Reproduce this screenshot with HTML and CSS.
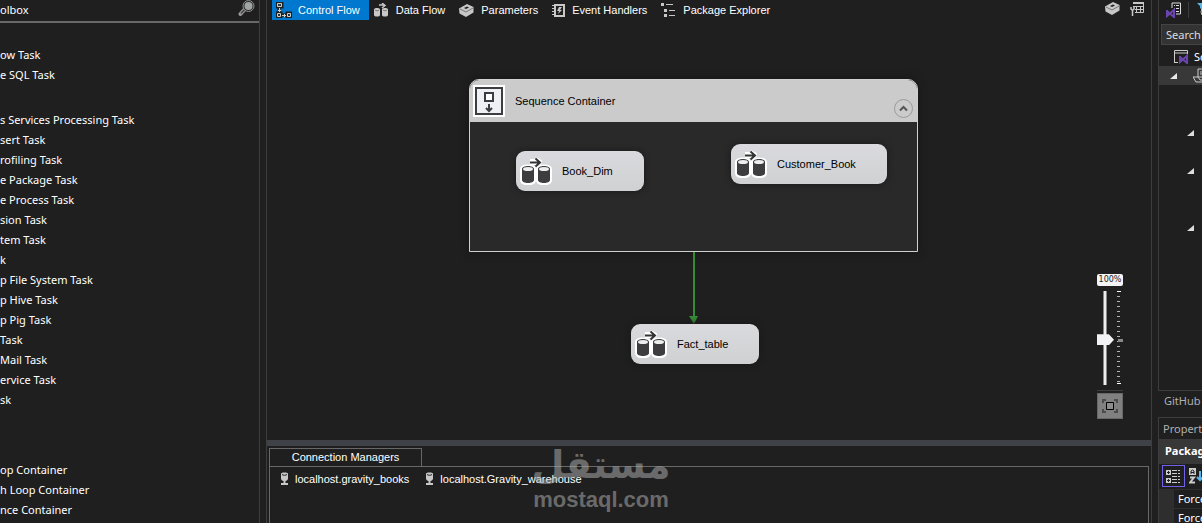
FILE: index.html
```html
<!DOCTYPE html>
<html lang="en">
<head>
<meta charset="utf-8">
<title>Package designer</title>
<link rel="stylesheet" href="styles.css">
</head>
<body>
<svg class="defs" width="0" height="0" aria-hidden="true">
  <symbol id="dataflow" viewBox="0 0 32 28">
    <g class="halo">
      <path d="M10 5h10M15 3l4 2-4 2"/>
      <path d="M3 12v11c0 3 10 3 10 0V12c0-2-10-2-10 0zM19 12v11c0 3 10 3 10 0V12c0-2-10-2-10 0z"/>
    </g>
    <path class="ink-line" d="M10 5.500h10M15.500 1.500l4.500 4-4.500 4"/>
    <path class="ink" d="M2 12v11c0 4 12 4 12 0V12c0-4-12-4-12 0zM18 12v11c0 4 12 4 12 0V12c0-4-12-4-12 0z"/>
    <ellipse class="lid" cx="8" cy="12" rx="5" ry="2"/>
    <ellipse class="lid" cx="24" cy="12" rx="5" ry="2"/>
  </symbol>
  <symbol id="cube" viewBox="0 0 15 13">
    <path class="fill" d="M0 4.500 8 0l6.500 3v5.500L7 13 .5 9.500z"/>
    <path class="cut-soft" d="M1 5l6 3 7-4"/>
    <path class="cut" d="M5 4l3-1.500 2 1-3 1.500z"/>
  </symbol>
  <symbol id="connection" viewBox="0 0 10 14">
    <path class="fill" d="M1 1.500C1 0 8 0 8 1.500v5C8 8 6.500 9 5.500 9v2H8v2H1v-2h2.500V9C2.500 9 1 8 1 6.500z"/>
    <path class="cut-line" d="M2 2.500c1 1 4 1 5 0"/>
  </symbol>
</svg>

<div class="shell">
  <aside class="toolbox">
    <header class="toolbox-head">
      <h2>olbox</h2>
      <button class="icon-btn" aria-label="Search toolbox">
        <svg width="17" height="17" viewBox="0 0 17 17"><path d="M7 9 2.500 14" stroke="#999" stroke-width="4" stroke-linecap="round"/><path d="M8 8 3 13.500" stroke="#444" stroke-width="1.500"/><circle cx="10.500" cy="6" r="5.500" fill="#2a2a2a" stroke="#8f8f8f"/><circle cx="10.500" cy="6" r="4" fill="#9fa6a4"/></svg>
      </button>
    </header>
    <ul class="tools">
      <li>ow Task</li>
      <li>e SQL Task</li>
    </ul>
    <ul class="tools tools-common">
      <li>s Services Processing Task</li>
      <li>sert Task</li>
      <li>rofiling Task</li>
      <li>e Package Task</li>
      <li>e Process Task</li>
      <li>sion Task</li>
      <li>tem Task</li>
      <li>k</li>
      <li>p File System Task</li>
      <li>p Hive Task</li>
      <li>p Pig Task</li>
      <li>Task</li>
      <li>Mail Task</li>
      <li>ervice Task</li>
      <li>sk</li>
    </ul>
    <ul class="tools tools-containers">
      <li>op Container</li>
      <li>h Loop Container</li>
      <li>nce Container</li>
    </ul>
  </aside>

  <main class="document">
    <nav class="tabs">
      <button class="tab tab-active">
        <svg width="16" height="16" viewBox="0 0 16 16" fill="none" stroke="#1f1f1f" stroke-width="3"><path d="M1 1h5v4H1zM1 11h4v4H1zM11 11h4v4h-4zM3 5v5M6 13h4"/><g stroke="#d8d0c4" stroke-width="1"><path d="M1.500 1.500h4v3h-4zM1.500 11.500h3v3h-3zM11.500 11.500h3v3h-3zM3.500 6v4M2 8.500h3M6 13.500h4M8.500 12v3"/></g></svg>
        Control Flow</button>
      <button class="tab">
        <svg width="15" height="14" viewBox="0 0 15 14"><path d="M5 2h5M8 0l3 2.500L8 5" fill="none" stroke="#c8c8c8" stroke-width="1.500"/><path class="fill" d="M0 6.500c0-2 6-2 6 0V12c0 2-6 2-6 0zM8 6.500c0-2 6-2 6 0V12c0 2-6 2-6 0z"/><path class="cut-soft" d="M1 7c1 1 3 1 4 0M9 7c1 1 3 1 4 0"/></svg>
        Data Flow</button>
      <button class="tab">
        <svg width="15" height="13"><use href="#cube"/></svg>
        Parameters</button>
      <button class="tab">
        <svg width="13" height="13" viewBox="0 0 13 13"><path d="M3 1h9v11H3z" fill="none" stroke="#c8c8c8" stroke-width="2"/><path d="M0 1.500h3M0 4.500h3M0 7.500h3M0 10.500h3" stroke="#c8c8c8"/><path class="fill" d="M7 3h3L8 6h2l-4 4 1-3H5z"/></svg>
        Event Handlers</button>
      <button class="tab">
        <svg width="15" height="14" viewBox="0 0 15 14"><path class="fill" d="M0 0h3v3H0zM3 6h3v3H3zM3 11h3v3H3zM5 1h7v1H5zM8 7h6v1H8zM8 12h6v1H8z"/></svg>
        Package Explorer</button>
      <span class="tab-tools">
        <button class="icon-btn" aria-label="Parameters"><svg width="15" height="13"><use href="#cube"/></svg></button>
        <button class="icon-btn" aria-label="Variables"><svg width="14" height="14" viewBox="0 0 14 14"><path d="M3 1.500h10.500v9H5M3 4.500h10.500M5 7.500h8.500M6.500 4v6M10.500 4v6" fill="none" stroke="#c8c8c8"/><path d="M3 1h11" stroke="#c8c8c8" stroke-width="2"/><path d="M1 5v2l1.500 1.500L4 7V5M2.500 8v6" fill="none" stroke="#c8c8c8" stroke-width="1.500"/></svg></button>
      </span>
    </nav>

    <section class="canvas" aria-label="Control flow">
      <section class="sequence">
        <header class="sequence-head">
          <svg class="sequence-icon" width="32" height="32" viewBox="0 0 32 32"><path d="M0 0h32v32H0z" fill="#fff"/><path d="M3 3h26v26H3z" fill="#eef0f3" stroke="#3c3d40" stroke-width="2"/><path d="M12 8h8v8h-8z" fill="#fff" stroke="#3c3d40" stroke-width="2"/><path d="M16 19v7M13 23l3 3 3-3" fill="none" stroke="#3c3d40" stroke-width="2"/></svg>
          <span>Sequence Container</span>
          <button class="collapse" aria-label="Collapse"><svg width="19" height="19" viewBox="0 0 19 19" fill="none"><circle cx="9.500" cy="9.500" r="9" stroke="#9b9b9b"/><path d="M6 11.500 9.500 8l3.500 3.500" stroke="#555" stroke-width="2"/></svg></button>
        </header>
      </section>
      <article class="node node-book"><svg width="32" height="28"><use href="#dataflow"/></svg>Book_Dim</article>
      <article class="node node-customer"><svg width="32" height="28"><use href="#dataflow"/></svg>Customer_Book</article>
      <svg class="connector" width="10" height="72" viewBox="0 0 10 72"><path d="M4 0h2v64H4zM0 64h9L5 72z" fill="#358a35"/></svg>
      <article class="node node-fact"><svg width="32" height="28"><use href="#dataflow"/></svg>Fact_table</article>

      <div class="zoom">
        <label class="zoom-value" for="zoom">100%</label>
        <div class="zoom-body">
          <input class="zoom-range" id="zoom" type="range" min="0" max="100" value="52">
          <svg width="8" height="94" viewBox="0 0 8 94"><path d="M1.500 5v86" stroke="#b4b4b4" stroke-width="3" stroke-dasharray="1 4"/><path d="M0 .5h4M0 92.500h4" stroke="#fff"/><path d="M1 48h5v3H1z" fill="#888"/></svg>
        </div>
        <button class="fit" aria-label="Zoom to fit"><svg width="16" height="14" viewBox="0 0 16 14" fill="none"><path d="M1 4V1h3M12 1h3v3M15 10v3h-3M4 13H1v-3" stroke="#4c4c4c" stroke-width="2"/><path d="M4.500 3.500h7v7h-7z" fill="#8d8d8d" stroke="#000"/></svg></button>
      </div>
    </section>

    <section class="connections">
      <h2 class="connections-tab">Connection Managers</h2>
      <ul class="connections-list">
        <li><svg width="10" height="14"><use href="#connection"/></svg>localhost.gravity_books</li>
        <li><svg width="10" height="14"><use href="#connection"/></svg>localhost.Gravity_warehouse</li>
      </ul>
      <div class="watermark"><span class="watermark-ar" lang="ar">مستقل</span><span class="watermark-en">mostaql.com</span></div>
    </section>
  </main>

  <aside class="side">
    <section class="explorer">
      <div class="side-tools">
        <svg width="16" height="16" viewBox="0 0 16 16"><path d="M6 6V1h8.500v11H10" fill="none" stroke="#ddd"/><path d="M8 3.500h1M10 3.500h3M8 6.500h1M10 6.500h3M10 9.500h3" stroke="#ddd"/><path d="M1 8v6l7-6v7L1 9" fill="none" stroke="#6a45b0" stroke-width="2"/></svg>
        <svg class="filter" width="12" height="16" viewBox="0 0 12 16"><path d="M0 1h9L6 4v5L3 6V4z" fill="#5cb8e6"/><circle cx="8" cy="10" r="4" fill="none" stroke="#ccc"/></svg>
      </div>
      <input class="search" type="text" aria-label="Search Solution Explorer" placeholder="Search Solution Explorer">
      <ul class="tree">
        <li class="tree-root"><svg width="16" height="14" viewBox="0 0 16 14"><path d="M.5 12.500V.5h13V4M0 3h14M0 12.500h4" fill="none" stroke="#ccc"/><path d="M6 6v6l7-6v7L6 7" fill="none" stroke="#6a45b0" stroke-width="2"/></svg>Solution</li>
        <li class="tree-row tree-selected"><svg width="7" height="6" viewBox="0 0 7 6"><path d="M7 0v6H0z" fill="#e8e8e8"/></svg><svg width="14" height="15" viewBox="0 0 14 15"><path d="M5 1h9v8H5zM7 4h6M7 6h6M0 9h5l2 3h7v2H3z" fill="none" stroke="#ccc"/></svg></li>
        <li class="tree-row row-a"><svg width="7" height="6" viewBox="0 0 7 6"><path d="M7 0v6H0z" fill="#ddd"/></svg></li>
        <li class="tree-row row-b"><svg width="7" height="6" viewBox="0 0 7 6"><path d="M7 0v6H0z" fill="#ddd"/></svg></li>
        <li class="tree-row row-c"><svg width="7" height="6" viewBox="0 0 7 6"><path d="M7 0v6H0z" fill="#ddd"/></svg></li>
      </ul>
    </section>
    <a class="side-link" href="#github">GitHub Copilot</a>
    <section class="properties">
      <h2>Properties</h2>
      <h3>Package</h3>
      <div class="prop-tools">
        <button class="prop-btn prop-btn-active" aria-label="Categorized"><svg width="15" height="15" viewBox="0 0 15 15"><path d="M0 1h5v5H0zM0 9h5v5H0z" fill="#ccc"/><path d="M1 3.500h3M2.500 2v3M1 11.500h3M2.500 10v3" stroke="#1f1f1f"/><path d="M6 1.500h5M6 4.500h5M6 7.500h5M6 10.500h5M6 13.500h5M12 1.500h2M12 4.500h2M12 7.500h2M12 10.500h2M12 13.500h2" stroke="#ccc"/></svg></button>
        <button class="prop-btn" aria-label="Alphabetical"><svg width="16" height="16" viewBox="0 0 16 16"><path d="M0 0h7v7H0z" fill="#ccc"/><path d="M2 6V3l1.500-1L5 3v3M2 4.500h3" fill="none" stroke="#1f1f1f"/><path d="M1 9.500h4L1 14.500h5" fill="none" stroke="#ccc" stroke-width="2"/><path d="M11 3v9M8 9l3 3 3-3" fill="none" stroke="#55b8f0" stroke-width="2"/></svg></button>
      </div>
      <ul class="props"><li>ForceExecution</li><li>ForceExecution</li></ul>
    </section>
  </aside>
</div>
</body>
</html>
```
FILE: styles.css
```css
* { box-sizing: border-box; }
body { margin: 0; background: #1f1f1f; color: #fff; font: 11px/20px "Noto Sans", sans-serif; overflow: hidden; }
h2, h3, ul { margin: 0; padding: 0; font-size: inherit; font-weight: normal; list-style: none; }
button { padding: 0; border: 0; background: none; color: inherit; font: inherit; }
svg { display: block; flex: none; }
.defs { position: absolute; }
.fill { fill: #c8c8c8; }
.cut { fill: #1f1f1f; }
.cut-line { fill: none; stroke: #1f1f1f; stroke-width: 1; }
.cut-soft { fill: none; stroke: #777; stroke-width: 1; }
.halo { fill: #fff; stroke: #fff; stroke-width: 6; stroke-linejoin: round; }
.ink { fill: #3d3d40; }
.ink-line { fill: none; stroke: #333; stroke-width: 2; }
.lid { fill: #eee; }

.shell { display: flex; gap: 6px; height: 100vh; overflow: hidden; }

.toolbox { flex: 0 0 260px; border-right: 1px solid #3d3d3d; overflow: hidden; white-space: nowrap; }
.toolbox-head { display: flex; justify-content: space-between; height: 23px; padding-right: 4px; border-bottom: 2px solid #686868; line-height: 19px; }
.tools { padding-top: 22px; }
.tools-common { padding-top: 25px; }
.tools-containers { padding-top: 50px; }

.document { display: flex; flex: 1; flex-direction: column; min-width: 0; border: solid #3d3d3d; border-width: 0 1px; font: 11px/20px "Liberation Sans", sans-serif; }
.tabs { display: flex; height: 21px; padding-left: 5px; }
.tab { display: flex; align-items: center; gap: 7px; height: 20px; margin-right: 14px; white-space: nowrap; }
.tab-active { gap: 6px; margin-right: 5px; padding: 0 9px 0 4px; background: #0078d0; }
.tab-tools { display: flex; gap: 10px; margin-left: auto; padding: 2px 7px 0 0; }
.icon-btn { align-self: flex-start; }

.canvas { position: relative; flex: 1; color: #000; }
.sequence { position: absolute; left: 202px; top: 58px; width: 449px; height: 173px; border: 1px solid #d0d0d0; border-radius: 10px 10px 0 0; background: #292929; box-shadow: 0 0 8px #151515; overflow: hidden; }
.sequence-head { display: flex; align-items: center; gap: 10px; height: 42px; padding: 0 4px 0 3px; background: #cbcbcb; }
.collapse { align-self: flex-end; margin: 0 0 4px auto; }
.node { position: absolute; display: flex; align-items: center; gap: 10px; height: 40px; padding-left: 4px; border-radius: 9px; background: linear-gradient(#dadade, #cfd1d2); box-shadow: 0 0 6px #181818; }
.node-book { left: 249px; top: 130px; width: 128px; }
.node-customer { left: 464px; top: 123px; width: 156px; }
.node-fact { left: 364px; top: 303px; width: 128px; }
.connector { position: absolute; left: 422px; top: 231px; }

.zoom { position: absolute; right: 28px; top: 253px; display: flex; flex-direction: column; width: 26px; }
.zoom-value { height: 12px; border-radius: 2px; background: #f4f4f6; color: #222; font: 8px/12px "DejaVu Sans", sans-serif; text-align: center; }
.zoom-body { display: flex; gap: 3px; margin-top: 5px; padding-bottom: 5px; border-bottom: 1px solid #3d3d3d; }
.zoom-range { width: 17px; height: 94px; margin: 0; appearance: none; background: linear-gradient(90deg, transparent 6px, #888 6px 7px, #eee 7px 9px, #888 9px 10px, transparent 10px); writing-mode: vertical-lr; }
.zoom-range::-webkit-slider-thumb { width: 17px; height: 11px; appearance: none; background: #f2f2f4; clip-path: polygon(0 0, 70% 0, 100% 50%, 70% 100%, 0 100%); }
.fit { display: grid; place-items: center; height: 26px; margin-top: 2px; border: 1px solid #686868; background: #808080; }

.connections { position: relative; flex: 0 0 83px; padding: 2px 2px 0; border-top: 6px solid #3e4246; display: flex; flex-direction: column; }
.connections-tab { width: 153px; height: 18px; border: 1px solid #686868; border-bottom: 0; line-height: 17px; text-align: center; }
.connections-list { display: flex; flex: 1; align-items: flex-start; gap: 16px; padding: 2px 10px; border: 1px solid #686868; border-bottom: 0; }
.connections-list li { display: flex; align-items: center; gap: 5px; }
.watermark { position: absolute; left: 265px; top: -4px; display: flex; flex-direction: column; align-items: center; width: 138px; color: #b4b4b4; opacity: .5; font-weight: bold; }
.watermark-ar { font: bold 38px/46px "DejaVu Sans", sans-serif; }
.watermark-en { font-size: 22px; line-height: 24px; }

.side { display: flex; flex: 0 0 44px; flex-direction: column; overflow: hidden; white-space: nowrap; }
.explorer { flex: none; height: 391px; border: solid #3d3d3d; border-width: 0 0 1px 1px; }
.side-tools { display: flex; gap: 6px; height: 24px; padding: 2px 0 0 7px; }
.filter { box-sizing: content-box; padding-left: 8px; border-left: 1px solid #3d3d3d; }
.search { display: block; width: 200px; height: 21px; margin-left: 2px; padding: 0 4px; border: 1px solid #444; background: #333; color: #ddd; font: inherit; }
.search::placeholder { color: #ddd; }
.tree-root { display: flex; align-items: center; gap: 4px; height: 21px; padding: 3px 0 0 15px; }
.tree-row { display: flex; align-items: center; height: 19px; padding-left: 28px; }
.tree-selected { gap: 16px; padding-left: 11px; background: #383838; }
.row-a { margin-top: 38px; }
.row-b { margin-top: 19px; }
.row-c { margin-top: 38px; }
.side-link { flex: none; height: 26px; padding-left: 6px; color: #b0b0b0; text-decoration: none; }
.properties { flex: none; border: solid #3d3d3d; border-width: 1px 0 0 1px; background: #2e2e2e; }
.properties h2 { height: 21px; padding-left: 4px; background: #1f1f1f; color: #b0b0b0; line-height: 22px; }
.properties h3 { height: 25px; padding-left: 6px; background: #383838; font-weight: bold; line-height: 24px; }
.prop-tools { display: flex; gap: 4px; padding: 1px 3px 2px; background: #1f1f1f; }
.prop-btn { display: grid; flex: none; place-items: center; height: 22px; }
.prop-btn-active { width: 23px; border: 1px solid #7160e8; }
.props { display: grid; gap: 1px; padding: 1px 0 0 15px; }
.props li { height: 18px; padding-left: 4px; background: #1f1f1f; line-height: 18px; }
```
